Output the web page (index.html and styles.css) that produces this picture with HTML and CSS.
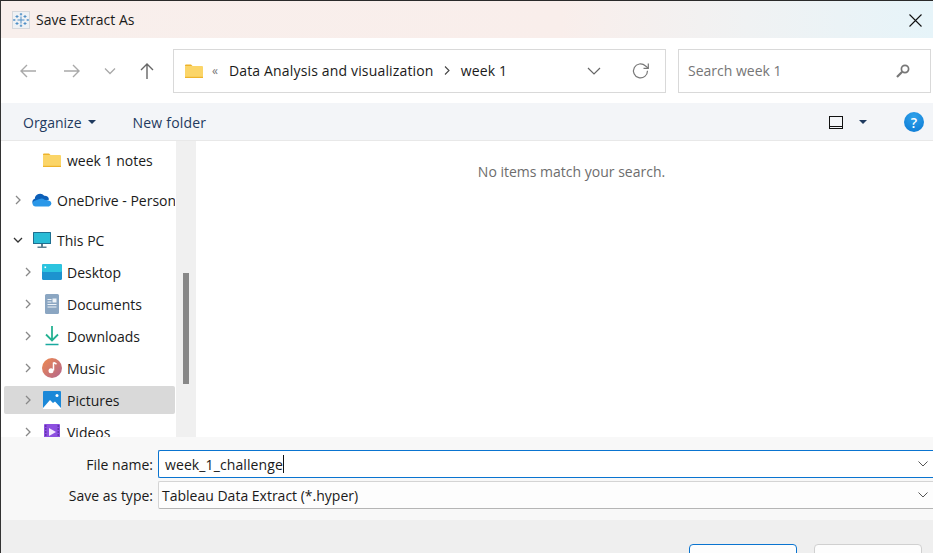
FILE: index.html
```html
<!DOCTYPE html>
<html>
  <head>
    <title>Save Extract As</title>
    <link rel="stylesheet" href="styles.css">
  </head>
  <body>
    <div class="dialog">
      <div class="titlebar">
        <svg class="app-icon" width="18" height="18" viewBox="0 0 18 18">
          <rect x="0.5" y="0.5" width="17" height="17" fill="#eef1f4" stroke="#d5d8dc"/>
          <g stroke="#4f8fc6" stroke-width="1" fill="none">
            <path d="M9 5.500v7M5.500 9h7"/>
            <path d="M5 4v3M3.500 5.500h3M13 4v3M11.500 5.500h3M5 11v3M3.500 12.500h3M13 11v3M11.500 12.500h3"/>
            <path d="M9 2v2.500M7.800 3.200h2.400M9 13.500V16M7.800 14.800h2.400M2 8v2M1.500 9h2M16 8v2M14.500 9h2"/>
          </g>
        </svg>
        <span class="title">Save Extract As</span>
        <svg class="close" width="13" height="13" viewBox="0 0 13 13">
          <path d="M0.500 0.500l12 12M12.500 0.500l-12 12" stroke="#111" stroke-width="1.100" fill="none"/>
        </svg>
      </div>

      <div class="navbar">
        <svg class="nav-btn" width="18" height="16" viewBox="0 0 18 16">
          <path d="M17 8H2M8 2L2 8l6 6" stroke="#a9a9a9" stroke-width="1.400" fill="none"/>
        </svg>
        <svg class="nav-btn fwd" width="18" height="16" viewBox="0 0 18 16">
          <path d="M1 8h15M10 2l6 6-6 6" stroke="#a9a9a9" stroke-width="1.400" fill="none"/>
        </svg>
        <svg class="nav-btn down" width="12" height="8" viewBox="0 0 12 8">
          <path d="M1 1.500l5 5 5-5" stroke="#a9a9a9" stroke-width="1.300" fill="none"/>
        </svg>
        <svg class="nav-btn up" width="16" height="18" viewBox="0 0 16 18">
          <path d="M8 17V2M2 8l6-6 6 6" stroke="#666" stroke-width="1.400" fill="none"/>
        </svg>
        <div class="address">
          <svg class="folder" width="18" height="14" viewBox="0 0 18 14">
            <path d="M0 1.500Q0 0.500 1 0.500h5l2 2H0z" fill="#eeb32b"/>
            <rect x="0" y="2" width="18" height="12" rx="1" fill="#fbd568"/>
            <rect x="0" y="12.800" width="18" height="1.200" fill="#eeb32b"/>
          </svg>
          <span class="crumb-more">«</span>
          <span class="crumb">Data Analysis and visualization</span>
          <svg class="crumb-sep" width="6" height="9" viewBox="0 0 6 9">
            <path d="M1 0.500l4 4-4 4" stroke="#444" stroke-width="1.100" fill="none"/>
          </svg>
          <span class="crumb">week 1</span>
          <svg class="addr-down" width="14" height="8" viewBox="0 0 14 8">
            <path d="M1 1l6 6 6-6" stroke="#666" stroke-width="1.200" fill="none"/>
          </svg>
          <svg class="refresh" width="18" height="18" viewBox="0 0 18 18">
            <path d="M15.500 8.800a7 7 0 1 1-2.200-5L16 6" stroke="#777" stroke-width="1.200" fill="none"/>
            <path d="M16.300 1.500V6.300h-4.800" stroke="#777" stroke-width="1.200" fill="none"/>
          </svg>
        </div>
        <div class="search">
          <span class="search-text">Search week 1</span>
          <svg width="14" height="14" viewBox="0 0 14 14">
            <circle cx="9" cy="5" r="3.600" stroke="#777" stroke-width="1.700" fill="none"/>
            <path d="M6.200 7.800L1 13" stroke="#777" stroke-width="2.200" fill="none"/>
          </svg>
        </div>
      </div>

      <div class="toolbar">
        <span class="tool">Organize</span>
        <span class="caret"></span>
        <span class="tool new-folder">New folder</span>
        <span class="view-icon"></span>
        <span class="caret view-caret"></span>
        <span class="help">?</span>
      </div>

      <div class="main">
        <div class="tree">
          <div class="row sub no-arrow">
            <svg class="icon" width="18" height="14" viewBox="0 0 18 14">
              <path d="M0 1.500Q0 0.500 1 0.500h5l2 2H0z" fill="#eeb32b"/>
              <rect x="0" y="2" width="18" height="12" rx="1" fill="#fbd568"/>
              <rect x="0" y="12.800" width="18" height="1.200" fill="#eeb32b"/>
            </svg>
            <span>week 1 notes</span>
          </div>
          <div class="row group">
            <svg class="arrow" width="6" height="10" viewBox="0 0 6 10"><path d="M1 1l4 4-4 4" stroke="#888" stroke-width="1.300" fill="none"/></svg>
            <svg class="icon" width="20" height="14" viewBox="0 0 20 14">
              <path d="M3.500 12a3.200 3.200 0 0 1-.7-6.300 5.300 5.300 0 0 1 9.400-3 4.200 4.200 0 0 1 4.800 3.700L10 10z" fill="#0c5fb8"/>
              <path d="M3.500 13.500a3 3 0 0 1-1.500-5.600L7.500 6a4.200 4.200 0 0 1 5 .8l4.200.6a3.100 3.100 0 0 1 .3 6.100z" fill="#2a97e8"/>
            </svg>
            <span>OneDrive - Personal</span>
          </div>
          <div class="row group">
            <svg class="arrow" width="10" height="6" viewBox="0 0 10 6"><path d="M1 1l4 4 4-4" stroke="#333" stroke-width="1.300" fill="none"/></svg>
            <svg class="icon" width="18" height="16" viewBox="0 0 18 16">
              <rect x="0" y="0" width="18" height="12" rx="0.500" fill="#1f6f90"/>
              <rect x="1" y="1" width="16" height="10" fill="#29bcd6"/>
              <rect x="8" y="12" width="2" height="3" fill="#5d7f8f"/>
              <rect x="4.500" y="14.500" width="9" height="1.500" fill="#5d7f8f"/>
            </svg>
            <span>This PC</span>
          </div>
          <div class="row sub">
            <svg class="arrow" width="6" height="10" viewBox="0 0 6 10"><path d="M1 1l4 4-4 4" stroke="#888" stroke-width="1.300" fill="none"/></svg>
            <svg class="icon" width="20" height="16" viewBox="0 0 20 16">
              <rect x="0" y="0" width="20" height="16" rx="1.500" fill="#1d93cf"/>
              <rect x="0" y="0" width="20" height="8" rx="1.500" fill="#2cc4df"/>
              <rect x="2.500" y="2.500" width="1.600" height="1.600" fill="#fff"/>
            </svg>
            <span>Desktop</span>
          </div>
          <div class="row sub">
            <svg class="arrow" width="6" height="10" viewBox="0 0 6 10"><path d="M1 1l4 4-4 4" stroke="#888" stroke-width="1.300" fill="none"/></svg>
            <svg class="icon" width="20" height="20" viewBox="0 0 20 20">
              <rect x="3" y="0" width="14" height="20" rx="1.500" fill="#8ba6c2"/>
              <path d="M5.500 5.500h4M5.500 8h4M5.500 10.500h9M5.500 13h9" stroke="#eef3f8" stroke-width="1"/>
              <rect x="10.500" y="4.500" width="4" height="4" fill="#eef3f8"/>
            </svg>
            <span>Documents</span>
          </div>
          <div class="row sub">
            <svg class="arrow" width="6" height="10" viewBox="0 0 6 10"><path d="M1 1l4 4-4 4" stroke="#888" stroke-width="1.300" fill="none"/></svg>
            <svg class="icon" width="20" height="20" viewBox="0 0 20 20">
              <path d="M10 0v14M4 8.500l6 6 6-6" stroke="#25b292" stroke-width="1.800" fill="none"/>
              <path d="M3.500 18.500h13" stroke="#1aa99f" stroke-width="1.600"/>
            </svg>
            <span>Downloads</span>
          </div>
          <div class="row sub">
            <svg class="arrow" width="6" height="10" viewBox="0 0 6 10"><path d="M1 1l4 4-4 4" stroke="#888" stroke-width="1.300" fill="none"/></svg>
            <svg class="icon" width="20" height="20" viewBox="0 0 20 20">
              <defs>
                <linearGradient id="music" x1="0" y1="0" x2="1" y2="1">
                  <stop offset="0" stop-color="#ef8a4e"/>
                  <stop offset="1" stop-color="#b3668f"/>
                </linearGradient>
              </defs>
              <circle cx="10" cy="10" r="10" fill="url(#music)"/>
              <path d="M11.500 4.500v8" stroke="#fff" stroke-width="1.500"/>
              <path d="M11.500 4.500l3 1.500" stroke="#fff" stroke-width="1.500"/>
              <circle cx="9" cy="12.800" r="2.500" fill="#fff"/>
            </svg>
            <span>Music</span>
          </div>
          <div class="row sub selected">
            <svg class="arrow" width="6" height="10" viewBox="0 0 6 10"><path d="M1 1l4 4-4 4" stroke="#888" stroke-width="1.300" fill="none"/></svg>
            <svg class="icon" width="18" height="18" viewBox="0 0 18 18">
              <rect x="0" y="0" width="18" height="18" rx="1" fill="#1b88d8"/>
              <path d="M0 17l7-8 3 3 2-1.500 6 6.500v1H0z" fill="#fff"/>
              <circle cx="14" cy="4.500" r="1.500" fill="#fff"/>
            </svg>
            <span>Pictures</span>
          </div>
          <div class="row sub">
            <svg class="arrow" width="6" height="10" viewBox="0 0 6 10"><path d="M1 1l4 4-4 4" stroke="#888" stroke-width="1.300" fill="none"/></svg>
            <svg class="icon" width="16" height="16" viewBox="0 0 16 16">
              <rect x="0" y="0" width="16" height="16" rx="1" fill="#8d4fe0"/>
              <path d="M5 4l7 4-7 4z" fill="#f3e9ff"/>
              <path d="M1 2h1.500M1 5h1.500M1 8h1.500M1 11h1.500M1 14h1.500M13.500 2H15M13.500 5H15M13.500 8H15M13.500 11H15M13.500 14H15" stroke="#3a1b78" stroke-width="1"/>
            </svg>
            <span>Videos</span>
          </div>
        </div>
        <div class="scrollbar"><div class="thumb"></div></div>
        <div class="files">No items match your search.</div>
      </div>

      <div class="fields">
        <div class="field">
          <label class="field-label">File name:</label>
          <div class="input focused">
            <span class="value">week_1_challenge</span><span class="cursor"></span>
            <svg class="input-down" width="10" height="6" viewBox="0 0 10 6"><path d="M0.500 0.500L5 5l4.500-4.500" stroke="#555" stroke-width="1" fill="none"/></svg>
          </div>
        </div>
        <div class="field">
          <label class="field-label">Save as type:</label>
          <div class="input combo">
            <span class="value">Tableau Data Extract (*.hyper)</span>
            <svg class="input-down" width="10" height="6" viewBox="0 0 10 6"><path d="M0.500 0.500L5 5l4.500-4.500" stroke="#555" stroke-width="1" fill="none"/></svg>
          </div>
        </div>
      </div>

      <div class="footer">
        <div class="button primary"></div>
        <div class="button"></div>
      </div>
    </div>
  </body>
</html>
```

FILE: styles.css
```css
html, body {
  height: 100%;
}
body {
  margin: 0;
  overflow: hidden;
  background: #fff;
  font-family: "Open Sans", "Noto Sans", sans-serif;
  font-size: 14px;
  color: #1a1a1a;
}
.dialog {
  display: flex;
  flex-direction: column;
  height: 553px;
  overflow: hidden;
  border-top: 1px solid #2a2a2a;
  border-left: 1px solid #333;
  box-sizing: border-box;
}
.titlebar {
  display: flex;
  align-items: center;
  flex-shrink: 0;
  height: 37px;
  padding-left: 11px;
  padding-right: 11px;
  background: linear-gradient(90deg, #f8efec 0%, #f9eeeb 60%, #f0f2f3 80%, #e6f4f9 100%);
}
.title {
  margin-left: 6px;
  font-size: 14px;
}
.close {
  margin-left: auto;
  margin-top: 1px;
}
.navbar {
  display: flex;
  align-items: center;
  flex-shrink: 0;
  height: 65px;
  padding-left: 18px;
  background: #fff;
}
.nav-btn {
  flex-shrink: 0;
}
.fwd {
  margin-left: 26px;
}
.down {
  margin-left: 23px;
}
.up {
  margin-left: 23px;
}
.address {
  display: flex;
  align-items: center;
  width: 493px;
  height: 44px;
  margin-left: 18px;
  padding-left: 11px;
  border: 1px solid #d9d9d9;
  box-sizing: border-box;
}
.crumb {
  letter-spacing: 0.16px;
}
.crumb-more {
  margin-left: 9px;
  margin-right: 11px;
  color: #777;
  font-size: 12px;
}
.crumb-sep {
  margin-left: 10px;
  margin-right: 11px;
}
.addr-down {
  margin-left: auto;
}
.refresh {
  margin-left: 31px;
  margin-right: 15px;
}
.search {
  display: flex;
  align-items: center;
  justify-content: space-between;
  width: 253px;
  height: 44px;
  margin-left: 12px;
  padding-left: 9px;
  padding-right: 20px;
  border: 1px solid #d9d9d9;
  box-sizing: border-box;
}
.search-text {
  color: #767676;
}
.toolbar {
  display: flex;
  align-items: center;
  flex-shrink: 0;
  height: 38px;
  padding-top: 1px;
  padding-left: 22px;
  background: #f3f5f8;
  border-bottom: 1px solid #e8e8e8;
  box-sizing: border-box;
}
.tool {
  color: #1f3a5f;
}
.caret {
  width: 0;
  height: 0;
  margin-left: 6px;
  border-left: 4px solid transparent;
  border-right: 4px solid transparent;
  border-top: 4px solid #1f3a5f;
}
.new-folder {
  margin-left: 37px;
  letter-spacing: 0.2px;
}
.view-icon {
  width: 12px;
  height: 9px;
  margin-left: auto;
  border: 1px solid #111;
  border-bottom: 3px double #111;
}
.view-caret {
  margin-left: 16px;
}
.help {
  display: flex;
  align-items: center;
  justify-content: center;
  width: 20px;
  height: 20px;
  margin-left: 37px;
  margin-right: 9px;
  border-radius: 50%;
  background: radial-gradient(circle at 50% 25%, #2fa2ea, #0a78d4);
  color: #fff;
  font-size: 14px;
  font-weight: 600;
}
.main {
  display: flex;
  height: 296px;
  flex-shrink: 0;
  overflow: hidden;
}
.tree {
  display: flex;
  flex-direction: column;
  gap: 4px;
  width: 175px;
  flex-shrink: 0;
  padding-top: 5px;
  overflow: hidden;
  box-sizing: border-box;
}
.row {
  display: flex;
  align-items: center;
  flex-shrink: 0;
  height: 28px;
  margin-left: 3px;
  margin-right: 1px;
  padding-left: 9px;
  border-radius: 2px;
  white-space: nowrap;
  overflow: hidden;
}
.group {
  margin-top: 8px;
}
.sub {
  padding-left: 19px;
}
.selected {
  background: #d9d9d9;
}
.arrow {
  flex-shrink: 0;
  width: 10px;
}
.icon {
  flex-shrink: 0;
  width: 20px;
  margin-left: 9px;
  margin-right: 5px;
}
.no-arrow .icon {
  margin-left: 19px;
}
.scrollbar {
  display: flex;
  justify-content: center;
  width: 20px;
  flex-shrink: 0;
  background: #f0f0f0;
}
.thumb {
  width: 6px;
  height: 111px;
  margin-top: 132px;
  background: #888;
}
.files {
  flex-grow: 1;
  padding-top: 21px;
  padding-left: 14px;
  text-align: center;
  color: #6d6d6d;
}
.fields {
  display: flex;
  flex-direction: column;
  gap: 3px;
  flex-shrink: 0;
  height: 83px;
  padding-top: 13px;
  background: #f8f8f8;
  box-sizing: border-box;
}
.field {
  display: flex;
  align-items: center;
}
.field-label {
  width: 152px;
  text-align: right;
}
.input {
  display: flex;
  align-items: center;
  flex-grow: 1;
  height: 28px;
  margin-left: 5px;
  margin-right: -1px;
  padding-right: 6px;
  box-sizing: border-box;
  background: #fff;
}
.focused {
  padding-left: 6px;
  border: 1px solid #0a74d0;
  border-width: 1px 0 1px 1px;
  border-radius: 2px 0 0 2px;
}
.focused .value {
  letter-spacing: 0.1px;
}
.combo {
  padding-left: 3px;
  background: #fdfdfd;
  border: 1px solid #d4d4d4;
  border-right: 0;
  border-bottom-color: #b5b5b5;
  border-radius: 2px 0 0 2px;
}
.cursor {
  width: 1px;
  height: 18px;
  background: #111;
}
.input-down {
  margin-left: auto;
}
.footer {
  display: flex;
  flex-grow: 1;
  justify-content: flex-end;
  gap: 17px;
  padding-top: 24px;
  padding-right: 11px;
  background: #efefef;
}
.button {
  width: 108px;
  height: 30px;
  flex-shrink: 0;
  box-sizing: border-box;
  background: #fdfdfd;
  border: 1px solid #d0d0d0;
  border-radius: 4px;
}
.primary {
  border-color: #0a74d0;
}
```
